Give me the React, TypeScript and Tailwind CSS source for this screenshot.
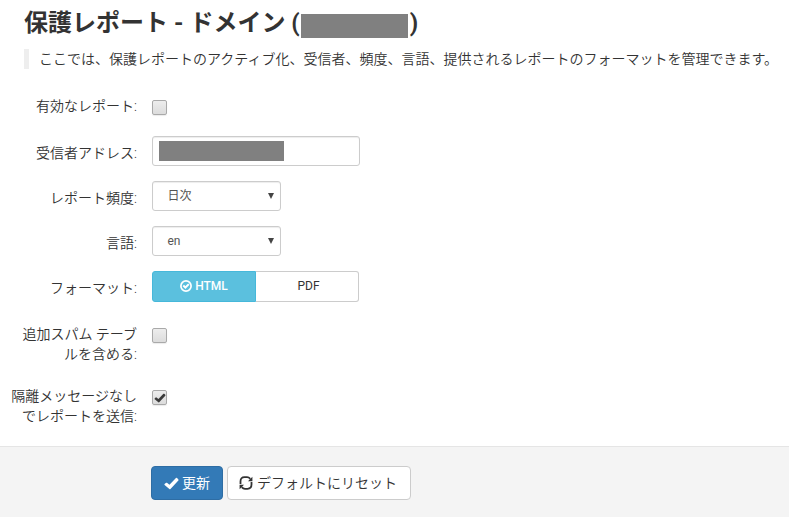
import React from 'react';

interface FieldRowProps {
  label: React.ReactNode;
  className: string;
  labelClass?: string;
  children: React.ReactNode;
}

const FieldRow: React.FC<FieldRowProps> = ({ label, className, labelClass = '', children }) => (
  <div className={`flex items-start gap-[15px] ${className}`}>
    <div className={`w-[137px] shrink-0 text-right font-[350] whitespace-nowrap leading-5 ${labelClass}`}>{label}</div>
    {children}
  </div>
);

const CheckMark = ({ className }: { className: string }) => (
  <svg viewBox="0 0 16 14" className={className} fill="currentColor">
    <path d="M3.1 6.3 5.8 8.4 12.8 1.2q.6-.6 1.2 0l1.4 1.4q.5.5 0 1.1L6.9 12.8q-.6.6-1.2.1L.6 8.7q-.5-.5-.1-1.1L1.9 6.4q.6-.5 1.2-.1z" />
  </svg>
);

const CircleCheck = () => (
  <svg viewBox="0 0 12 12" className="h-3 w-3" fill="none" stroke="currentColor">
    <circle cx="6" cy="6" r="5.1" strokeWidth="1.7" />
    <path d="M3.3 5.6 5.4 7.5 8.8 4.1" strokeWidth="2" />
  </svg>
);

const RefreshIcon = () => (
  <svg viewBox="0 0 14 14" className="h-3.5 w-3.5" fill="none" stroke="currentColor" strokeWidth="1.8">
    <path d="M1.5 8V5.4Q1.5 1.2 5.5 1.2H8Q9.8 1.2 11.3 2.8" />
    <path d="M12.5 6v2.6q0 4.2-4 4.2H6Q4.2 12.8 2.7 11.2" />
    <path d="M13.4.8v4.4H9zM.6 13.2V8.8H5z" fill="currentColor" stroke="none" />
  </svg>
);

const Checkbox = ({ checked = false, className = '' }: { checked?: boolean; className?: string }) => (
  <div
    role="checkbox"
    aria-checked={checked}
    className={`flex h-[15px] w-[15px] items-center justify-center rounded-[2px] border border-[#a9a9a9] bg-linear-to-b from-[#ededed] to-[#dcdcdc] shadow-[0_1px_1px_rgba(0,0,0,0.08)] ${className}`}
  >
    {checked && <CheckMark className="h-[10px] w-[12px] text-[#3b3b3b]" />}
  </div>
);

const SelectBox = ({ value }: { value: string }) => (
  <div className="flex h-[30px] w-[129px] items-center justify-between rounded-[3px] border border-[#ccc] bg-white pr-[6px] pl-[14.5px] text-xs text-[#555] shadow-[inset_0_1px_1px_rgba(0,0,0,0.075)]">
    <span>{value}</span>
    <svg viewBox="0 0 6 6" className="h-[6px] w-[6px]" fill="#444">
      <path d="M0 0h6L3 6z" />
    </svg>
  </div>
);

export default function App() {
  return (
    <div className="flex h-[517px] w-[789px] flex-col overflow-hidden bg-white font-['Roboto','Noto_Sans_CJK_JP',sans-serif] text-sm text-[#333]">
      <h1 className="mt-[9px] ml-6 flex h-7 items-center text-2xl leading-7 font-bold whitespace-nowrap">
        <span>保護レポート - ドメイン (</span>
        <span className="mt-[5px] ml-px h-6 w-[107px] bg-[#808080]" />
        <span className="ml-0.5">)</span>
      </h1>

      <p className="mt-3 ml-6 h-5 border-l-[5px] border-[#eee] pl-[10px] leading-5 font-[350] whitespace-nowrap">
        ここでは、保護レポートのアクティブ化、受信者、頻度、言語、提供されるレポートのフォーマットを管理できます。
      </p>

      <div className="h-[377px] pt-[27px]">
        <FieldRow label="有効なレポート:" className="h-10">
          <Checkbox className="mt-1" />
        </FieldRow>
        <FieldRow label="受信者アドレス:" className="h-[45px]" labelClass="mt-[7px]">
          <div className="h-[30px] w-[208px] rounded-[3px] border border-[#ccc] bg-white px-[6px] py-1 shadow-[inset_0_1px_1px_rgba(0,0,0,0.075)]">
            <div className="h-5 w-[125px] bg-[#808080]" />
          </div>
        </FieldRow>
        <FieldRow label="レポート頻度:" className="h-[45px]" labelClass="mt-[7px]">
          <SelectBox value="日次" />
        </FieldRow>
        <FieldRow label="言語:" className="h-[45px]" labelClass="mt-[7px]">
          <SelectBox value="en" />
        </FieldRow>
        <FieldRow label="フォーマット:" className="h-[53px]" labelClass="mt-[7px]">
          <div className="flex h-[31px] text-xs">
            <button className="flex w-[104px] items-center justify-center gap-[3px] rounded-l-[3px] border border-[#46b8da] bg-[#5bc0de] pb-0.5 font-medium text-white">
              <CircleCheck />
              <span>HTML</span>
            </button>
            <button className="w-[103px] rounded-r-[3px] border border-l-0 border-[#ccc] bg-white pb-0.5 pl-[3px]">PDF</button>
          </div>
        </FieldRow>
        <FieldRow label={<>追加スパム テーブ<br />ルを含める:</>} className="h-[62px]">
          <Checkbox className="mt-1" />
        </FieldRow>
        <FieldRow label={<>隔離メッセージなし<br />でレポートを送信:</>} className="h-[60px]">
          <Checkbox checked className="mt-1" />
        </FieldRow>
      </div>

      <div className="flex flex-1 items-start gap-1 border-t border-[#e5e5e5] bg-[#f4f4f4] pt-[19px] pl-[151px]">
        <button className="flex h-[34px] w-[72px] items-center justify-center gap-[3px] rounded border border-[#2e6da4] bg-[#337ab7] whitespace-nowrap text-white">
          <CheckMark className="h-[13px] w-[15px]" />
          <span>更新</span>
        </button>
        <button className="flex h-[34px] w-[184px] items-center justify-center gap-1 rounded border border-[#ccc] bg-white pr-0.5 whitespace-nowrap">
          <RefreshIcon />
          <span className="font-[350]">デフォルトにリセット</span>
        </button>
      </div>
    </div>
  );
}
